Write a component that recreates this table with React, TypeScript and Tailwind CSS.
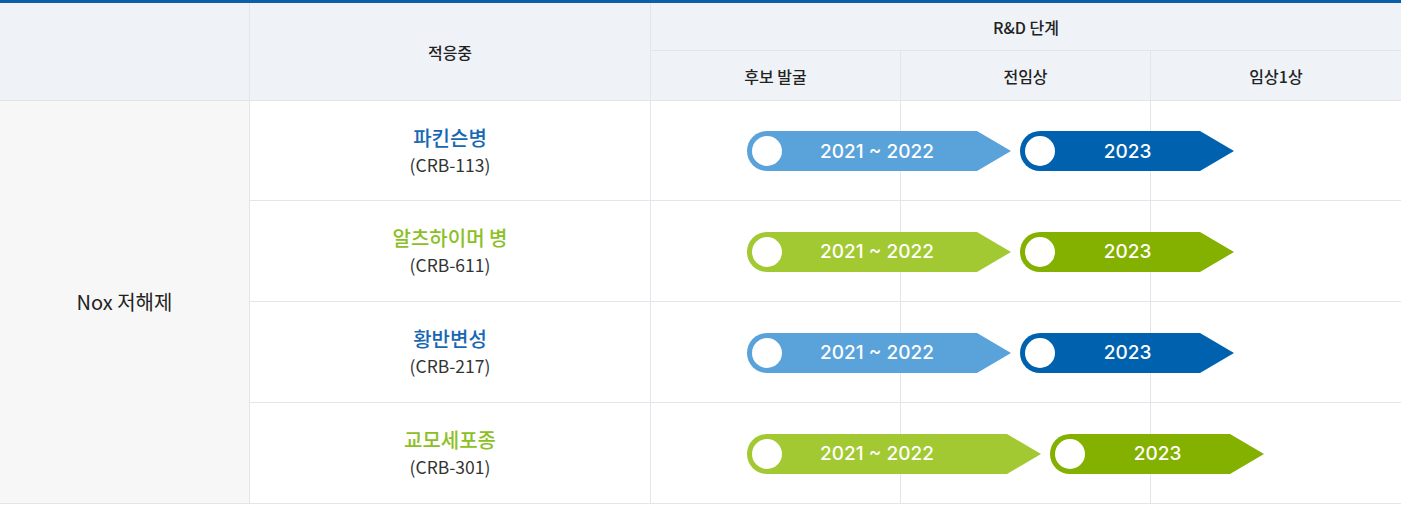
import React from 'react';

type Pill = { label: string; bodyWidth: number; textWidth: number; color: string };

interface Row {
  name: string;
  code: string;
  tone: 'blue' | 'green';
  pills: Pill[];
  rowClass: string;
}

const BLUE_LIGHT = '#5aa2da';
const BLUE_DARK = '#0062ae';
const GREEN_LIGHT = '#a2c931';
const GREEN_DARK = '#84b000';

const rows: Row[] = [
  {
    name: '파킨슨병',
    code: '(CRB-113)',
    tone: 'blue',
    rowClass: 'row-start-3',
    pills: [
      { label: '2021 ~ 2022', bodyWidth: 230, textWidth: 190, color: BLUE_LIGHT },
      { label: '2023', bodyWidth: 180, textWidth: 150, color: BLUE_DARK },
    ],
  },
  {
    name: '알츠하이머 병',
    code: '(CRB-611)',
    tone: 'green',
    rowClass: 'row-start-4',
    pills: [
      { label: '2021 ~ 2022', bodyWidth: 230, textWidth: 190, color: GREEN_LIGHT },
      { label: '2023', bodyWidth: 180, textWidth: 150, color: GREEN_DARK },
    ],
  },
  {
    name: '황반변성',
    code: '(CRB-217)',
    tone: 'blue',
    rowClass: 'row-start-5',
    pills: [
      { label: '2021 ~ 2022', bodyWidth: 230, textWidth: 190, color: BLUE_LIGHT },
      { label: '2023', bodyWidth: 180, textWidth: 150, color: BLUE_DARK },
    ],
  },
  {
    name: '교모세포종',
    code: '(CRB-301)',
    tone: 'green',
    rowClass: 'row-start-6',
    pills: [
      { label: '2021 ~ 2022', bodyWidth: 260, textWidth: 190, color: GREEN_LIGHT },
      { label: '2023', bodyWidth: 180, textWidth: 150, color: GREEN_DARK },
    ],
  },
];

function Arrow({ pill }: { pill: Pill }) {
  // rounded body + triangle head; widths come from data
  return (
    <div className="flex items-center">
      <div
        className="flex h-10 items-center rounded-l-full"
        style={{ width: pill.bodyWidth, backgroundColor: pill.color }}
      >
        <span className="ml-[5px] h-[30px] w-[30px] shrink-0 rounded-full bg-white" />
        <span
          className="text-center text-[19px] font-medium leading-none text-white"
          style={{ width: pill.textWidth, fontFamily: 'Inter, "Noto Sans", sans-serif' }}
        >
          {pill.label}
        </span>
      </div>
      <svg width="34" height="40" viewBox="0 0 34 40" className="block">
        <polygon points="0,0 34,20 0,40" fill={pill.color} />
      </svg>
    </div>
  );
}

export default function App() {
  const cellLine = 'border-[#e2e5e9]';
  return (
    <div
      className="w-[1401px] bg-white"
      style={{ fontFamily: '"Noto Sans CJK KR", "Noto Sans", sans-serif' }}
    >
      <div className="h-[3px] bg-[#0a5fa9]" />
      <div className="grid grid-cols-[249px_401px_250px_250px_251px] grid-rows-[48px_50px_100px_101px_101px_101px] text-[#222]">
        {/* header */}
        <div className={`col-start-1 row-span-2 row-start-1 border-b bg-[#eff3f8] ${cellLine}`} />
        <div
          className={`col-start-2 row-span-2 row-start-1 flex items-center justify-center border-b border-l bg-[#eff3f8] text-[16px] font-medium ${cellLine}`}
        >
          적응중
        </div>
        <div
          className={`col-span-3 col-start-3 row-start-1 flex items-center justify-center border-b border-l bg-[#eff3f8] text-[16px] font-medium ${cellLine}`}
        >
          R&amp;D 단계
        </div>
        {['후보 발굴', '전임상', '임상1상'].map((h, i) => (
          <div
            key={h}
            className={`row-start-2 flex items-center justify-center border-b border-l bg-[#eff3f8] text-[16px] font-medium ${cellLine} ${
              i === 0 ? 'col-start-3' : i === 1 ? 'col-start-4' : 'col-start-5'
            }`}
          >
            {h}
          </div>
        ))}

        {/* body */}
        <div
          className={`col-start-1 row-span-4 row-start-3 flex items-center justify-center border-b bg-[#f7f7f7] text-[20px] ${cellLine}`}
        >
          Nox 저해제
        </div>

        {rows.map((r) => (
          <React.Fragment key={r.code}>
            <div
              className={`col-start-2 ${r.rowClass} flex flex-col items-center justify-center border-b border-l ${cellLine}`}
            >
              <div
                className={`text-[20px] font-medium leading-[27px] ${
                  r.tone === 'blue' ? 'text-[#1767b3]' : 'text-[#8cbf26]'
                }`}
              >
                {r.name}
              </div>
              <div className="text-[17.5px] leading-[27px] text-[#333]">{r.code}</div>
            </div>
            <div className={`col-start-3 ${r.rowClass} border-b border-l ${cellLine}`} />
            <div className={`col-start-4 ${r.rowClass} border-b border-l ${cellLine}`} />
            <div className={`col-start-5 ${r.rowClass} border-b border-l ${cellLine}`} />
            <div className={`col-span-3 col-start-3 ${r.rowClass} z-10 flex items-center gap-[9px] pl-[97px]`}>
              {r.pills.map((p) => (
                <Arrow key={p.label} pill={p} />
              ))}
            </div>
          </React.Fragment>
        ))}
      </div>
    </div>
  );
}
